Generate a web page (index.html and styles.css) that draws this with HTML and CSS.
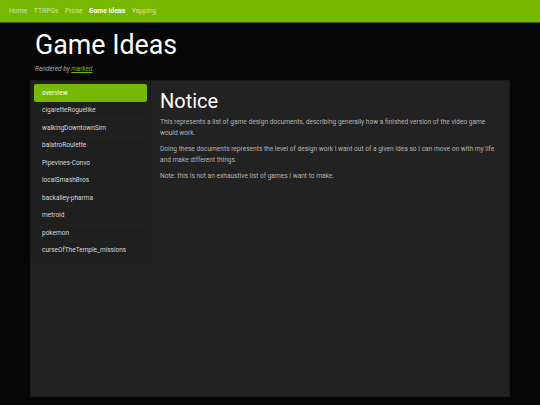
FILE: index.html
```html
<!DOCTYPE html>
<html>
<head>
<meta charset="utf-8">
<link rel="stylesheet" href="styles.css">
</head>
<body>
<nav class="topnav">
  <a href="#">Home</a>
  <a href="#">TTRPGs</a>
  <a href="#">Prose</a>
  <a href="#" class="active">Game Ideas</a>
  <a href="#">Yapping</a>
</nav>
<div class="wrap">
  <header class="header">
    <h1 class="title">Game Ideas</h1>
    <p class="rendered">Rendered by <a href="#">marked</a>.</p>
  </header>
  <main class="panel">
    <aside class="sidebar">
      <a href="#" class="item selected">overview</a>
      <a href="#" class="item">cigaretteRoguelike</a>
      <a href="#" class="item">walkingDowntownSim</a>
      <a href="#" class="item">balatroRoulette</a>
      <a href="#" class="item">Pipevines-Convo</a>
      <a href="#" class="item">localSmashBros</a>
      <a href="#" class="item">backalley-pharma</a>
      <a href="#" class="item">metroid</a>
      <a href="#" class="item">pokemon</a>
      <a href="#" class="item">curseOfTheTemple_missions</a>
    </aside>
    <section class="content">
      <h2 class="notice">Notice</h2>
      <p>This represents a list of game design documents, describing generally how a finished version of the video game would work.</p>
      <p>Doing these documents represents the level of design work I want out of a given idea so I can move on with my life and make different things.</p>
      <p>Note: this is not an exhaustive list of games I want to make.</p>
    </section>
  </main>
</div>
</body>
</html>
```

FILE: styles.css
```css
html, body {
  margin: 0;
  padding: 0;
  background: #060606;
  font-family: Roboto, "Liberation Sans", sans-serif;
  height: 100%;
}

.topnav {
  display: flex;
  gap: 6.5px;
  align-items: center;
  height: 22px;
  padding: 0 9px;
  background: #76b900;
  border-bottom: 1px solid #3f6300;
}

.topnav a {
  color: #cfe6a6;
  text-decoration: none;
  font-size: 6.8px;
}

.topnav a.active {
  color: #ffffff;
  font-weight: 700;
}

.wrap {
  width: 480px;
  margin: 0 auto;
}

.header {
  padding: 6px 5px 0;
  height: 51px;
}

.title {
  margin: 0;
  font-size: 26.8px;
  font-weight: 400;
  color: #ffffff;
  line-height: 32px;
}

.rendered {
  margin: 4px 0 0;
  font-size: 6.5px;
  font-style: italic;
  color: #b0b0b0;
}

.rendered a {
  color: #76b900;
  text-decoration: underline;
}

.panel {
  display: flex;
  align-items: flex-start;
  height: 315px;
  background: #222222;
  border: 1px solid #1a1a1a;
  box-sizing: content-box;
}

.sidebar {
  display: flex;
  flex-direction: column;
  width: 113px;
  padding: 3px;
  background: #1f1f1f;
  border-right: 1px solid #1b1b1b;
}

.item {
  display: block;
  height: 17.5px;
  line-height: 17.5px;
  padding: 0 8px;
  font-size: 6.5px;
  color: #d8d8d8;
  text-decoration: none;
  border-bottom: 1px solid #232323;
  box-sizing: border-box;
}

.item.selected {
  background: #76b900;
  color: #ffffff;
  border-radius: 2px;
  height: 18px;
  line-height: 18px;
  border-bottom: none;
}

.item:last-child {
  border-bottom: none;
}

.content {
  flex: 1;
  padding: 8px 10px 0 9px;
}

.notice {
  margin: 0 0 4px;
  font-size: 20px;
  font-weight: 400;
  color: #ffffff;
  line-height: 24px;
}

.content p {
  margin: 0 0 6px;
  font-size: 6.6px;
  line-height: 10.5px;
  color: #b5b5b5;
}
```
